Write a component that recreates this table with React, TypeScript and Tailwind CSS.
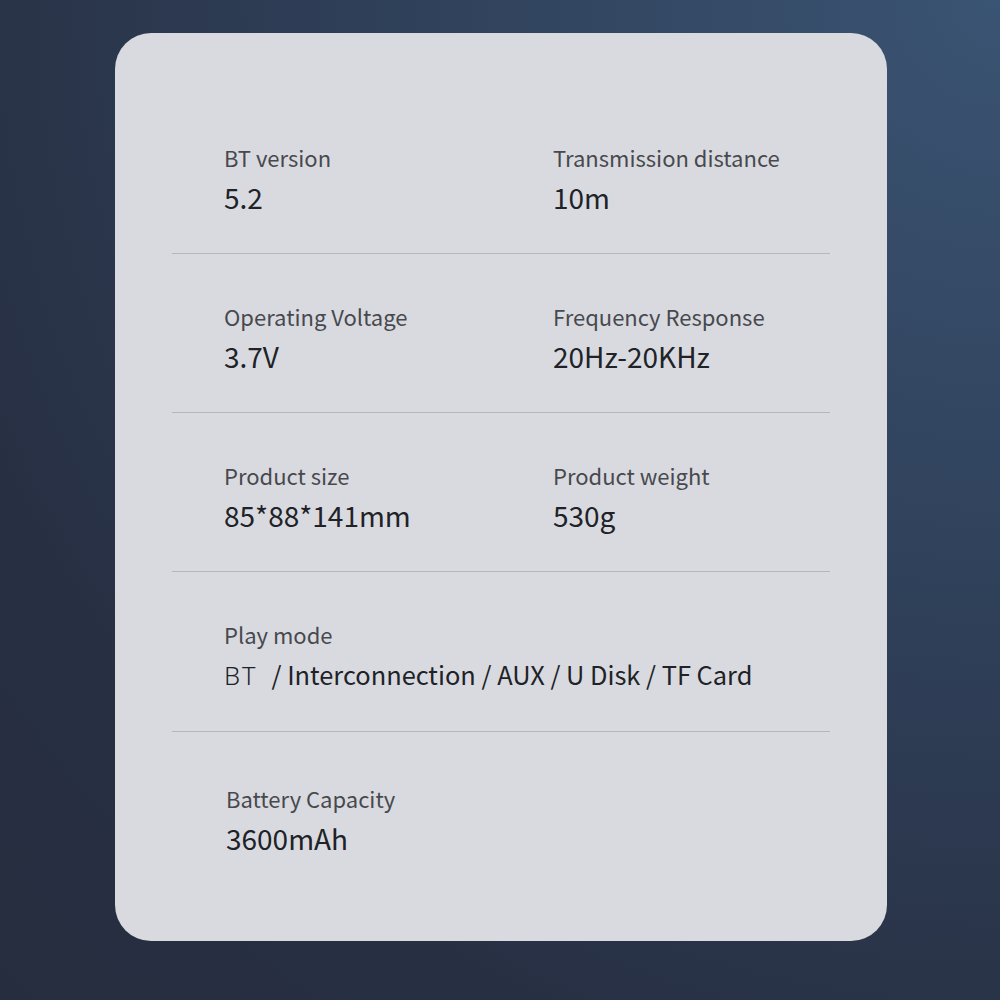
type Spec = { label: string; value: string };

const rows: Spec[][] = [
  [
    { label: "BT version", value: "5.2" },
    { label: "Transmission distance", value: "10m" },
  ],
  [
    { label: "Operating Voltage", value: "3.7V" },
    { label: "Frequency Response", value: "20Hz-20KHz" },
  ],
  [
    { label: "Product size", value: "85*88*141mm" },
    { label: "Product weight", value: "530g" },
  ],
];

function Cell({ label, value }: Spec) {
  return (
    <div className="flex flex-col gap-[8px]">
      <span className="text-[22px] leading-[28px] text-[#47494e]">{label}</span>
      <span className="text-[28px] leading-[36px] text-[#202227]">{value}</span>
    </div>
  );
}

export default function App() {
  return (
    <div
      className="w-[1000px] h-[1000px] pt-[33px] pl-[115px] bg-[radial-gradient(circle_at_100%_0%,#3a5473_0%,#2f3f58_45%,#272f42_80%,#262d3f_100%)]"
      style={{ fontFamily: '"Noto Sans CJK SC", "Noto Sans", sans-serif' }}
    >
      <div className="w-[772px] h-[908px] rounded-[36px] bg-[#d9dadf] pt-[62px] px-[57px]">
        {rows.map((row, i) => (
          <div
            key={i}
            className="grid grid-cols-[329px_1fr] pl-[52px] pt-[48px] pb-[38px] border-b border-[#b4b6bb]"
          >
            {row.map((c) => (
              <Cell key={c.label} {...c} />
            ))}
          </div>
        ))}

        <div className="pl-[52px] pt-[48px] pb-[38px] border-b border-[#b4b6bb]">
          <div className="flex flex-col gap-[8px]">
            <span className="text-[22px] leading-[28px] text-[#47494e]">Play mode</span>
            <span className="text-[25.4px] leading-[36px] text-[#202227]">
              <span
                className="font-light tracking-[2px] mr-[14px]"
                style={{ fontFamily: '"Noto Sans", sans-serif' }}
              >
                BT
              </span>
              / Interconnection / AUX / U Disk / TF Card
            </span>
          </div>
        </div>

        <div className="pl-[54px] pt-[52px]">
          <Cell label="Battery Capacity" value="3600mAh" />
        </div>
      </div>
    </div>
  );
}
